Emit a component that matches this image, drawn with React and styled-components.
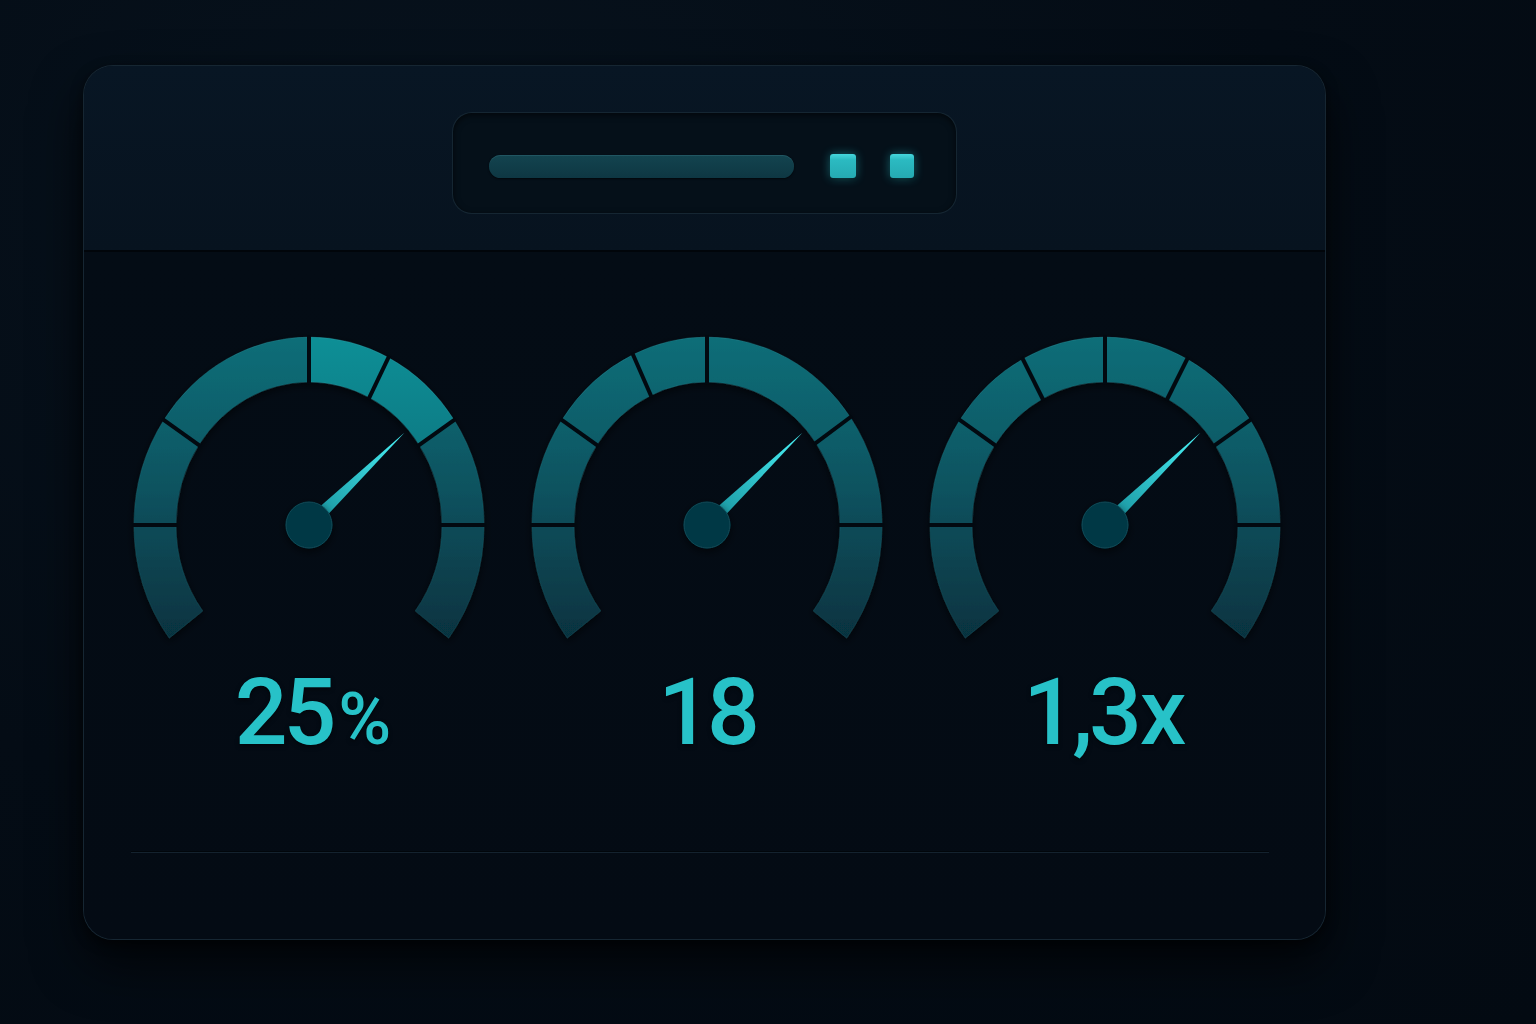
import styled, { createGlobalStyle } from "styled-components";

const GlobalStyle = createGlobalStyle`
  html, body {
    margin: 0;
    padding: 0;
    background: #040c15;
  }
  body {
    font-family: Roboto, "Liberation Sans", sans-serif;
  }
`;

const Page = styled.div`
  width: 1536px;
  height: 1024px;
  box-sizing: border-box;
  padding: 65px 0 0 83px;
  background: radial-gradient(ellipse at 30% 20%, #07121d 0%, #040c15 55%, #030a12 100%);
  overflow: hidden;
`;

const Card = styled.div`
  width: 1243px;
  height: 875px;
  box-sizing: border-box;
  display: flex;
  flex-direction: column;
  border-radius: 30px;
  border: 1px solid rgba(70, 100, 120, 0.28);
  background: #050e18;
  box-shadow: 0 24px 50px rgba(0, 0, 0, 0.65), 0 4px 12px rgba(0, 0, 0, 0.5);
  overflow: hidden;
`;

const Header = styled.div`
  height: 186px;
  flex-shrink: 0;
  display: flex;
  align-items: center;
  justify-content: center;
  padding-top: 10px;
  box-sizing: border-box;
  background: linear-gradient(180deg, #081624 0%, #07131f 100%);
  border-bottom: 2px solid #01050a;
  box-shadow: 0 1px 0 rgba(60, 90, 110, 0.25);
`;

const Controls = styled.div`
  width: 505px;
  height: 102px;
  box-sizing: border-box;
  display: flex;
  align-items: center;
  padding: 6px 36px 0;
  gap: 36px;
  border-radius: 20px;
  background: #051019;
  border: 1px solid rgba(60, 90, 110, 0.3);
  box-shadow: inset 0 2px 6px rgba(0, 0, 0, 0.6);
`;

const Track = styled.div`
  width: 305px;
  height: 23px;
  border-radius: 12px;
  background: linear-gradient(180deg, #13444f 0%, #0e3743 100%);
  box-shadow: inset 0 1px 0 rgba(90, 160, 175, 0.2), 0 1px 2px rgba(0, 0, 0, 0.6);
`;

const Led = styled.div`
  width: ${(p) => p.$w}px;
  height: 24px;
  border-radius: 3px;
  margin-left: ${(p) => p.$ml || 0}px;
  background: linear-gradient(180deg, #45d6dc 0%, #2bbac1 25%, #25aab2 100%);
  box-shadow: 0 0 10px rgba(40, 200, 210, 0.45), 0 2px 3px rgba(0, 0, 0, 0.5);
`;

const Body = styled.div`
  flex: 1;
  display: flex;
  flex-direction: column;
  padding-top: 78px;
  background: linear-gradient(180deg, #040c15 0%, #040b14 100%);
`;

const GaugeRow = styled.div`
  display: grid;
  grid-template-columns: repeat(3, 398px);
  padding-left: 26px;
`;

const GaugeCol = styled.div`
  display: flex;
  flex-direction: column;
  align-items: center;
`;

const Value = styled.div`
  margin-top: 14px;
  height: 98px;
  font-family: Roboto, "Liberation Sans", sans-serif;
  font-weight: 500;
  font-size: 93px;
  line-height: 98px;
  letter-spacing: -4px;
  color: #27c2c8;
  text-shadow: 0 2px 4px rgba(0, 0, 0, 0.5);
  white-space: nowrap;
  padding-left: ${(p) => p.$shift || 0}px;
`;

const Unit = styled.span`
  font-size: ${(p) => p.$size}px;
  letter-spacing: 0;
  margin-left: ${(p) => p.$ml || 0}px;
`;

const Divider = styled.div`
  margin: 89px 56px 0 47px;
  height: 1px;
  background: #01060b;
  box-shadow: 0 1px 0 rgba(60, 90, 110, 0.3);
`;

const CX = 199;
const CY = 195;
const RXO = 175;
const RYO = 188;
const RXI = 133;
const RYI = 143;

function pt(rx, ry, deg) {
  const a = (deg * Math.PI) / 180;
  return [CX + rx * Math.sin(a), CY - ry * Math.cos(a)];
}

function sector(a1, a2) {
  const [x1, y1] = pt(RXO, RYO, a1);
  const [x2, y2] = pt(RXO, RYO, a2);
  const [x3, y3] = pt(RXI, RYI, a2);
  const [x4, y4] = pt(RXI, RYI, a1);
  const large = a2 - a1 > 180 ? 1 : 0;
  return `M${x1} ${y1} A${RXO} ${RYO} 0 ${large} 1 ${x2} ${y2} L${x3} ${y3} A${RXI} ${RYI} 0 ${large} 0 ${x4} ${y4} Z`;
}

function Gauge({ id, stops, hot }) {
  const segs = [];
  for (let i = 0; i < stops.length - 1; i++) segs.push([stops[i], stops[i + 1]]);
  const inner = stops.slice(1, -1);
  const needleAng = 46;
  const a = (needleAng * Math.PI) / 180;
  const ux = Math.sin(a);
  const uy = -Math.cos(a);
  const px = -uy;
  const py = ux;
  const bx = CX + ux * 14;
  const by = CY + uy * 14;
  const tx = CX + ux * 133;
  const ty = CY + uy * 133;
  const needle = `${bx + px * 6},${by + py * 6} ${tx},${ty} ${bx - px * 6},${by - py * 6}`;
  return (
    <svg width="398" height="320" viewBox="0 0 398 320">
      <defs>
        <linearGradient id={`base${id}`} x1="0" y1="0" x2="0" y2="320" gradientUnits="userSpaceOnUse">
          <stop offset="0" stopColor="#0e6f79" />
          <stop offset="0.35" stopColor="#0c5c68" />
          <stop offset="0.62" stopColor="#0a4a57" />
          <stop offset="1" stopColor="#06303d" />
        </linearGradient>
        <linearGradient id={`hot${id}`} x1="0" y1="0" x2="0" y2="320" gradientUnits="userSpaceOnUse">
          <stop offset="0" stopColor="#119097" />
          <stop offset="0.4" stopColor="#0e7a84" />
          <stop offset="1" stopColor="#0a5562" />
        </linearGradient>
        <linearGradient id={`needle${id}`} x1={bx} y1={by} x2={tx} y2={ty} gradientUnits="userSpaceOnUse">
          <stop offset="0" stopColor="#1a97a2" />
          <stop offset="1" stopColor="#4af4f8" />
        </linearGradient>
        <filter id={`sh${id}`} x="-50%" y="-50%" width="200%" height="200%">
          <feDropShadow dx="0" dy="3" stdDeviation="4" floodColor="#000" floodOpacity="0.6" />
        </filter>
      </defs>
      <g filter={`url(#sh${id})`}>
        {segs.map(([s, e], i) => (
          <path
            key={i}
            d={sector(s, e)}
            fill={hot.includes(i) ? `url(#hot${id})` : `url(#base${id})`}
            stroke="rgba(90,190,200,0.12)"
            strokeWidth="1"
          />
        ))}
      </g>
      {inner.map((s) => {
        const [x1, y1] = pt(RXI - 2, RYI - 2, s);
        const [x2, y2] = pt(RXO + 2, RYO + 2, s);
        return <line key={s} x1={x1} y1={y1} x2={x2} y2={y2} stroke="#020910" strokeWidth="4" />;
      })}
      <polygon points={needle} fill={`url(#needle${id})`} />
      <circle cx={CX} cy={CY} r="23" fill="#063845" stroke="#0a4a57" strokeWidth="1" filter={`url(#sh${id})`} />
    </svg>
  );
}

const gauges = [
  { id: "a", stops: [-127, -90, -56, 0, 27, 56, 90, 127], hot: [3, 4], value: "25", unit: "%", size: 72, ml: 6, shift: 8 },
  { id: "b", stops: [-127, -90, -56, -25, 0, 55, 90, 127], hot: [], value: "18", shift: 0 },
  { id: "c", stops: [-127, -90, -56, -28, 0, 28, 56, 90, 127], hot: [], value: "1,3", unit: "x", size: 93, ml: 2, shift: 0 },
];

export default function App() {
  return (
    <>
      <GlobalStyle />
      <Page>
        <Card>
          <Header>
            <Controls>
              <Track />
              <Led $w={26} />
              <Led $w={24} $ml={-2} />
            </Controls>
          </Header>
          <Body>
            <GaugeRow>
              {gauges.map((g) => (
                <GaugeCol key={g.id}>
                  <Gauge id={g.id} stops={g.stops} hot={g.hot} />
                  <Value $shift={g.shift}>
                    {g.value}
                    {g.unit && (
                      <Unit $size={g.size} $ml={g.ml}>
                        {g.unit}
                      </Unit>
                    )}
                  </Value>
                </GaugeCol>
              ))}
            </GaugeRow>
            <Divider />
          </Body>
        </Card>
      </Page>
    </>
  );
}
